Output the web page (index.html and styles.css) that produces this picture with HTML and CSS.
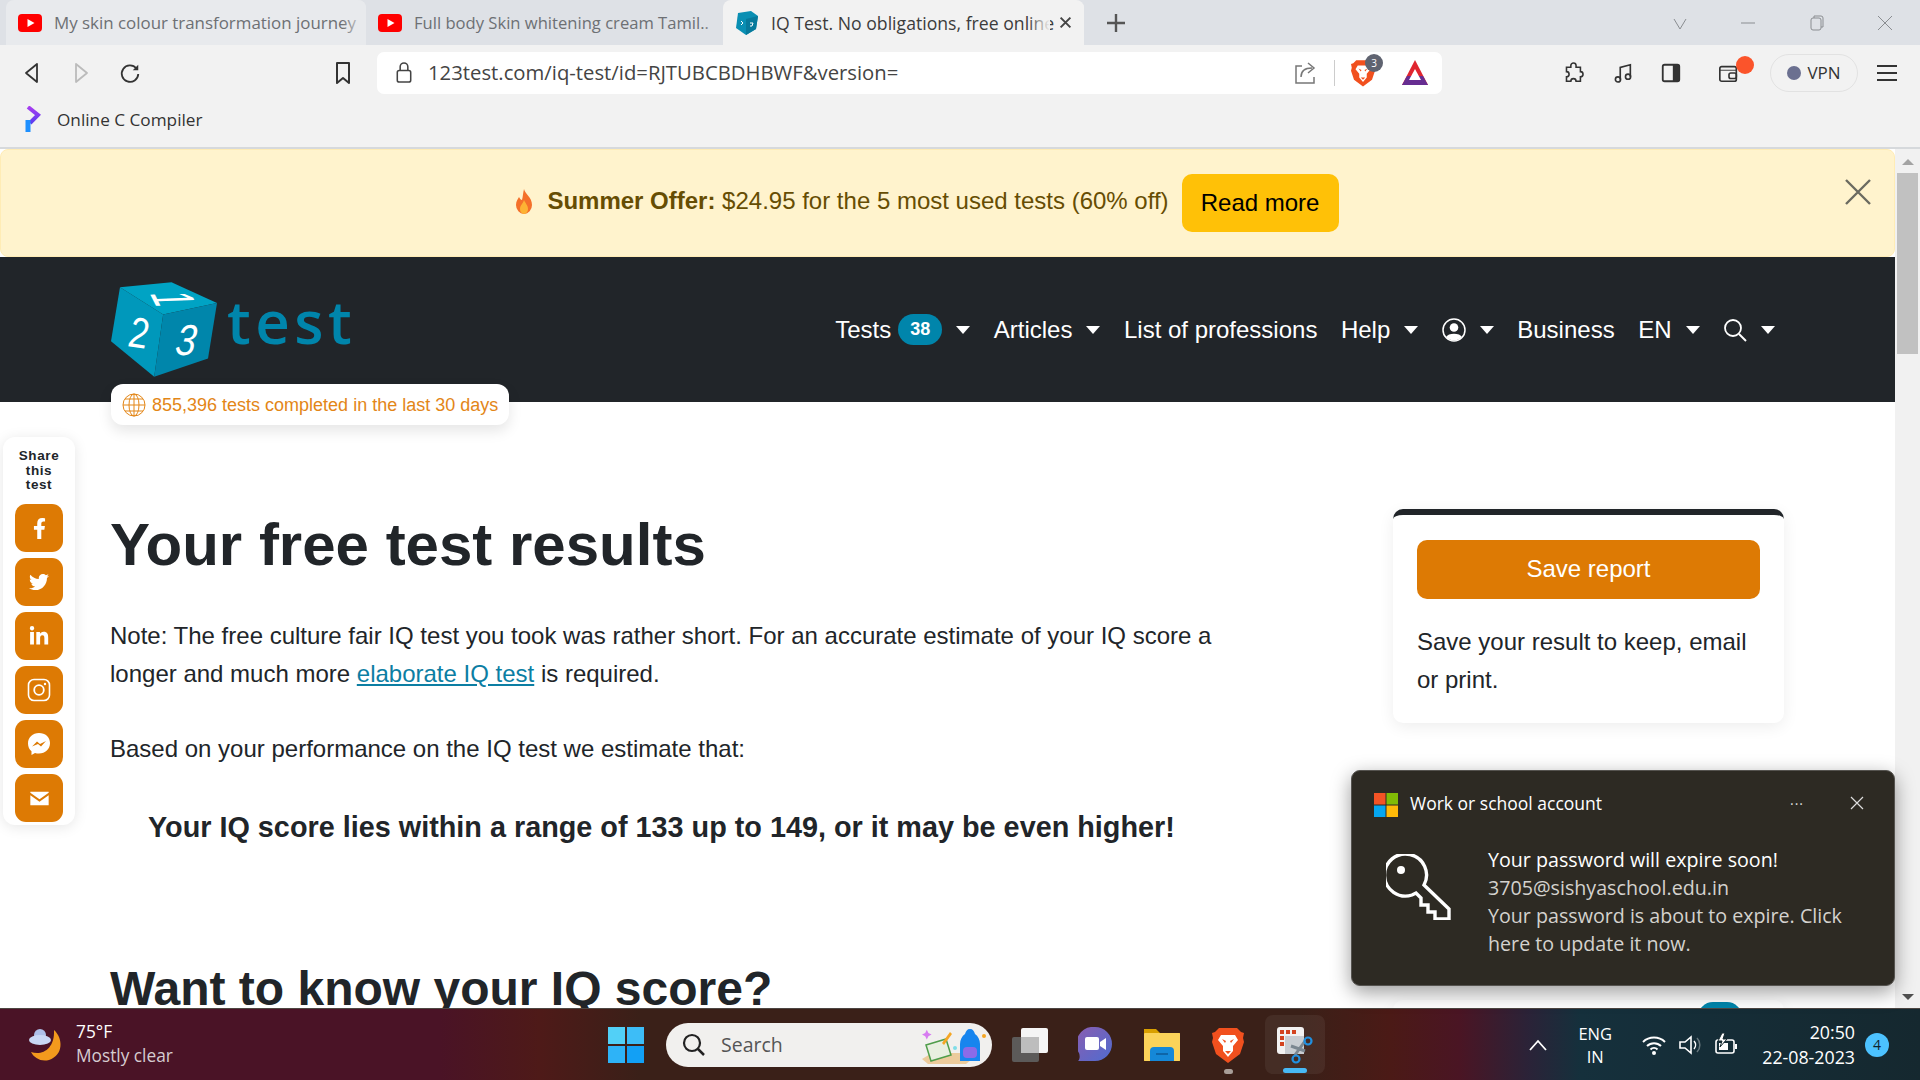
FILE: index.html
```html
<!DOCTYPE html>
<html lang="en">
<head>
<meta charset="utf-8">
<title>IQ Test</title>
<link rel="stylesheet" href="styles.css">
</head>
<body>
<div class="screen">
  <div class="tabs">
    <div class="tab tab-one">
      <svg class="fav" viewBox="0 0 24 18"><rect width="24" height="18" rx="4" fill="#f00"/><path d="M9.500 5v8l7-4z" fill="#fff"/></svg>
      <span class="tab-title">My skin colour transformation journey</span>
    </div>
    <div class="tab tab-two">
      <svg class="fav" viewBox="0 0 24 18"><rect width="24" height="18" rx="4" fill="#f00"/><path d="M9.500 5v8l7-4z" fill="#fff"/></svg>
      <span class="tab-title">Full body Skin whitening cream Tamil..</span>
    </div>
    <div class="tab tab-active">
      <svg class="fav-cube" viewBox="0 0 24 26"><path d="M3 3l13-2 7 5-2 13-10 6-10-7z" fill="#0a8fb3"/><path d="M11 9l12-3-2 13-10 6z" fill="#077a9c"/><path d="M6 11l2 2-2 2M15 13h3l-1 3h-2" stroke="#fff" fill="none"/></svg>
      <span class="tab-title">IQ Test. No obligations, free online test</span>
      <svg class="tab-x" viewBox="0 0 12 12"><path d="M1.500 1.500l9 9M10.500 1.500l-9 9" stroke="#444" stroke-width="1.800"/></svg>
    </div>
    <svg class="tab-plus" viewBox="0 0 20 20"><path d="M10 1v18M1 10h18" stroke="#555" stroke-width="2.400"/></svg>
    <div class="win-controls">
      <svg viewBox="0 0 16 16"><path d="M2 4l6 10 6-10" stroke="#8a8d91" fill="none"/></svg>
      <svg viewBox="0 0 16 16"><path d="M1 8h14" stroke="#8a8d91"/></svg>
      <svg viewBox="0 0 16 16"><rect x="2" y="3" width="10" height="12" rx="2" stroke="#8a8d91" fill="none"/><path d="M5 3V1h7a2 2 0 0 1 2 2v9h-2" stroke="#8a8d91" fill="none"/></svg>
      <svg viewBox="0 0 16 16"><path d="M1 1l14 14M15 1L1 15" stroke="#8a8d91"/></svg>
    </div>
  </div>

  <div class="toolbar">
    <svg class="tool tool-back" viewBox="0 0 20 24"><path d="M15 3L4 12l11 9z" fill="none" stroke="#333" stroke-width="1.800" stroke-linejoin="round"/></svg>
    <svg class="tool" viewBox="0 0 20 24"><path d="M5 3l11 9-11 9z" fill="none" stroke="#bbb" stroke-width="1.800" stroke-linejoin="round"/></svg>
    <svg class="tool" viewBox="0 0 24 24"><path d="M19 7a9 9 0 1 0 2 6" fill="none" stroke="#333" stroke-width="2"/><path d="M21 3v6h-6z" fill="#333"/></svg>
    <svg class="tool tool-mark" viewBox="0 0 20 24"><path d="M4 2h12v20l-6-5-6 5z" fill="none" stroke="#333" stroke-width="2" stroke-linejoin="round"/></svg>
    <div class="address">
      <svg class="lock" viewBox="0 0 18 24"><rect x="2" y="10" width="14" height="12" rx="2" fill="none" stroke="#444" stroke-width="1.600"/><path d="M5 10V6a4 4 0 0 1 8 0v4" fill="none" stroke="#444" stroke-width="1.600"/></svg>
      <span class="url">123test.com/iq-test/id=RJTUBCBDHBWF&amp;version=</span>
      <svg class="share-ico" viewBox="0 0 24 24"><path d="M9 5H3v17h18v-6" fill="none" stroke="#777" stroke-width="1.500"/><path d="M8 16c0-6 4-9 11-9M15 2l6 5-6 5" fill="none" stroke="#777" stroke-width="1.500"/></svg>
      <span class="addr-sep"></span>
      <div class="brave-wrap">
        <svg class="brave" viewBox="0 0 32 36"><path d="M7 1h18l4 4 3 1-1 5 1 4-4 12-8 6-4 3-4-3-8-6L0 15l1-4-1-5 3-1z" fill="#f1501e"/><path d="M9 8h14l3 5-5 6v5l-5 6-5-6v-5l-5-6z" fill="#fff"/><path d="M10 12l4 2-1 2zM22 12l-4 2 1 2zM13 24h6l-3 3z" fill="#f1501e"/></svg>
        <span class="brave-count">3</span>
      </div>
      <svg class="bat" viewBox="0 0 28 28"><path d="M14 1l13 25H1z" fill="#e0252f"/><path d="M1 26l5-9h16l5 9z" fill="#662d91"/><path d="M14 10l6 11H8z" fill="#fff"/></svg>
    </div>
    <svg class="tool ext-puzzle" viewBox="0 0 24 24"><path d="M9 3a3 3 0 0 1 6 0v2h5v5a3 3 0 0 1 0 6v5h-5a3 3 0 0 0-6 0H4v-5a3 3 0 0 0 0-6V5h5z" transform="translate(0 1) scale(.95)" fill="none" stroke="#333" stroke-width="1.800"/></svg>
    <svg class="tool ext-music" viewBox="0 0 24 24"><path d="M9 19V6l11-3v13" fill="none" stroke="#333" stroke-width="1.800"/><circle cx="6.500" cy="19" r="2.800" fill="none" stroke="#333" stroke-width="1.800"/><circle cx="17.500" cy="16" r="2.800" fill="none" stroke="#333" stroke-width="1.800"/></svg>
    <svg class="tool ext-side" viewBox="0 0 24 24"><rect x="3" y="3" width="18" height="18" rx="2" fill="none" stroke="#333" stroke-width="2"/><rect x="14" y="3" width="7" height="18" fill="#333"/></svg>
    <div class="wallet-wrap">
      <svg class="tool" viewBox="0 0 24 24"><rect x="2" y="5" width="18" height="16" rx="2" fill="none" stroke="#333" stroke-width="1.800"/><path d="M2 9h18" stroke="#333"/><rect x="12" y="12" width="8" height="6" rx="2" fill="none" stroke="#333" stroke-width="1.800"/></svg>
      <span class="wallet-dot"></span>
    </div>
    <div class="vpn"><span class="vpn-dot"></span><span>VPN</span></div>
    <div class="burger"><span></span><span></span><span></span></div>
  </div>

  <div class="bookmarks">
    <svg class="pcode" viewBox="0 0 16 26"><defs><linearGradient id="pc" x1="0" y1="0" x2="0" y2="1"><stop offset="0" stop-color="#a83df0"/><stop offset="1" stop-color="#5b3df0"/></linearGradient></defs><path d="M3 1l10 8-8 8" fill="none" stroke="url(#pc)" stroke-width="4"/><path d="M3 14v12" stroke="#1e90ff" stroke-width="5"/></svg>
    <span>Online C Compiler</span>
  </div>

  <div class="viewport">
    <div class="page">
      <div class="alert">
        <svg class="flame" viewBox="0 0 20 28"><path d="M10 1c1 5 8 8 8 16a8 9 0 0 1-16 0c0-4 2-6 3-8 1 2 2 3 3 3 1-4 1-7 2-11z" fill="#f4702a"/><path d="M10 12c1 3 4 5 4 9a4 5 0 0 1-8 0c0-4 3-5 4-9z" fill="#fdb234"/></svg>
        <span class="alert-text"><b>Summer Offer:</b> $24.95 for the 5 most used tests (60% off)</span>
        <span class="alert-btn">Read more</span>
        <svg class="alert-close" viewBox="0 0 26 26"><path d="M1 1l24 24M25 1L1 25" stroke="#6b6a60" stroke-width="2.400"/></svg>
      </div>

      <div class="nav">
        <svg class="logo-cube" viewBox="93 65 319 285">
          <path d="M120 80L275 65 412 128 250 162z" fill="#00a3c4"/>
          <path d="M120 80L250 162 223 350 93 243z" fill="#0098bb"/>
          <path d="M250 162L412 128 385 295 223 350z" fill="#0086ab"/>
          <text class="cube-num" transform="matrix(.3 .6 -1.300 .17 210 101)">1</text>
          <text class="cube-num" transform="matrix(.8 .12 -.05 1 146 258)">2</text>
          <text class="cube-num" transform="translate(283 285) scale(.85 1) skewX(-8)">3</text>
        </svg>
        <span class="logo-word">test</span>
        <div class="menu">
          <span class="menu-item">Tests<span class="badge">38</span><i class="caret"></i></span>
          <span class="menu-item">Articles<i class="caret"></i></span>
          <span class="menu-item">List of professions</span>
          <span class="menu-item">Help<i class="caret"></i></span>
          <span class="menu-item"><svg class="user-ico" viewBox="0 0 24 24"><circle cx="12" cy="12" r="11" fill="none" stroke="#fff" stroke-width="1.500"/><circle cx="12" cy="9.500" r="4.300" fill="#fff"/><path d="M4 19c2-4.500 14-4.500 16 0a11 11 0 0 1-16 0z" fill="#fff"/></svg><i class="caret"></i></span>
          <span class="menu-item">Business</span>
          <span class="menu-item">EN<i class="caret"></i></span>
          <span class="menu-item"><svg class="search-ico" viewBox="0 0 24 24"><circle cx="10" cy="10" r="8" fill="none" stroke="#fff" stroke-width="1.800"/><path d="M16 16l7 7" stroke="#fff" stroke-width="2"/></svg><i class="caret"></i></span>
        </div>
        <div class="counter">
          <svg class="globe" viewBox="0 0 24 24"><g fill="none" stroke="#e38617" stroke-width="1"><circle cx="12" cy="12" r="11"/><ellipse cx="12" cy="12" rx="5" ry="11"/><path d="M12 1v22M1 12h22M3 6h18M3 18h18"/></g></svg>
          <span>855,396 tests completed in the last 30 days</span>
        </div>
      </div>

      <div class="content">
        <div class="article">
          <h1>Your free test results</h1>
          <p>Note: The free culture fair IQ test you took was rather short. For an accurate estimate of your IQ score a longer and much more <a href="#">elaborate IQ test</a> is required.</p>
          <p>Based on your performance on the IQ test we estimate that:</p>
          <p class="score">Your IQ score lies within a range of 133 up to 149, or it may be even higher!</p>
          <h2>Want to know your IQ score?</h2>
        </div>
        <div class="aside">
          <div class="card">
            <span class="save-btn">Save report</span>
            <p>Save your result to keep, email or print.</p>
          </div>
          <div class="card card-next"><span class="next-dot"></span></div>
        </div>
      </div>

      <div class="sharebar">
        <div class="share-title">Share this test</div>
        <span class="social"><svg viewBox="0 0 320 512" class="s-fb"><path d="M279.14 288l14.22-92.66h-88.91v-60.13c0-25.35 12.42-50.06 52.24-50.06h40.42V6.26S260.43 0 225.36 0c-73.22 0-121.08 44.38-121.08 124.72v70.62H22.89V288h81.39v224h100.17V288z"/></svg></span>
        <span class="social"><svg viewBox="0 0 512 512" class="s-tw"><path d="M459.37 151.716c.325 4.548.325 9.097.325 13.645 0 138.72-105.583 298.558-298.558 298.558-59.452 0-114.68-17.219-161.137-47.106 8.447.974 16.568 1.299 25.34 1.299 49.055 0 94.213-16.568 130.274-44.832-46.132-.975-84.792-31.188-98.112-72.772 6.498.974 12.995 1.624 19.818 1.624 9.421 0 18.843-1.3 27.614-3.573-48.081-9.747-84.143-51.98-84.143-102.985v-1.299c13.969 7.797 30.214 12.67 47.431 13.319-28.264-18.843-46.781-51.005-46.781-87.391 0-19.492 5.197-37.36 14.294-52.954 51.655 63.675 129.3 105.258 216.365 109.807-1.624-7.797-2.599-15.918-2.599-24.04 0-57.828 46.782-104.934 104.934-104.934 30.213 0 57.502 12.67 76.67 33.137 23.715-4.548 46.456-13.32 66.599-25.34-7.798 24.366-24.366 44.833-46.132 57.827 21.117-2.273 41.584-8.122 60.426-16.243-14.292 20.791-32.161 39.308-52.628 54.253z"/></svg></span>
        <span class="social"><svg viewBox="0 0 448 512" class="s-in"><path d="M100.28 448H7.4V148.9h92.88zM53.79 108.1C24.09 108.1 0 83.5 0 53.8a53.79 53.79 0 0 1 107.58 0c0 29.7-24.1 54.3-53.79 54.3zM447.9 448h-92.68V302.4c0-34.7-.7-79.2-48.29-79.2-48.29 0-55.69 37.7-55.69 76.7V448h-92.78V148.9h89.08v40.8h1.3c12.4-23.5 42.69-48.3 87.88-48.3 94 0 111.28 61.9 111.28 142.3V448z"/></svg></span>
        <span class="social"><svg viewBox="0 0 24 24" class="s-ig"><rect x="1.500" y="1.500" width="21" height="21" rx="5.500" fill="none" stroke="#fff" stroke-width="1.600"/><circle cx="12" cy="12" r="4.800" fill="none" stroke="#fff" stroke-width="1.800"/><circle cx="18" cy="6" r="1.200"/></svg></span>
        <span class="social"><svg viewBox="0 0 24 24" class="s-ms"><path d="M12 1C5.700 1 1 5.500 1 11.500c0 3.200 1.300 5.900 3.500 7.800V23l3.500-2c1.300.4 2.600.6 4 .6 6.300 0 11-4.500 11-10.500S18.300 1 12 1z"/><path d="M5 14.500l5-5 3 2.500 6-3-5 5.500-3-2.500z" fill="#dd7a04"/></svg></span>
        <span class="social"><svg viewBox="0 0 24 18" class="s-em"><path d="M1 1h22v1L12 10 1 2zM1 5l11 8 11-8v12H1z"/></svg></span>
      </div>
    </div>
    <div class="scrollbar">
      <i class="arrow-up"></i>
      <span class="thumb"></span>
      <i class="arrow-down"></i>
    </div>
  </div>

  <div class="taskbar">
    <div class="weather">
      <svg class="moon" viewBox="0 0 36 34"><path d="M26 2c9 8 10 25-5 30-8 2-15-2-18-8 11 4 24-3 23-22z" fill="#f39a1d"/><circle cx="12" cy="7" r="6" fill="#aebfe8"/><ellipse cx="12" cy="12" rx="11" ry="5" fill="#c9d7f4"/></svg>
      <div class="weather-text"><div>75°F</div><div class="weather-sub">Mostly clear</div></div>
    </div>
    <div class="tb-center">
      <svg class="start" viewBox="0 0 36 36"><rect width="17" height="17" fill="#52d0f7"/><rect x="19" width="17" height="17" fill="#3dbdf7"/><rect y="19" width="17" height="17" fill="#2eb3f7"/><rect x="19" y="19" width="17" height="17" fill="#12a0f5"/></svg>
      <div class="search-pill">
        <svg class="tb-search" viewBox="0 0 24 24"><circle cx="10" cy="10" r="8" fill="none" stroke="#222" stroke-width="2.200"/><path d="M16 16l6 6" stroke="#222" stroke-width="2.500"/></svg>
        <span class="search-word">Search</span>
        <svg class="search-art" viewBox="0 0 72 44"><path d="M2 36l10-6h30l10 6-6 5H8z" fill="#eccb9c"/><path d="M6 22l20-6 5 16-20 6z" fill="#e8efe0" stroke="#4f9d4a" stroke-width="1.500"/><path d="M22 20l8-11 2 2-8 11z" fill="#f5a623"/><path d="M1 1l2 4 4 2-4 2-2 4-2-4-4-2 4-2z" transform="translate(6 6) scale(.8)" fill="#d77cf0"/><circle cx="35" cy="25" r="2" fill="#7fdde8"/><path d="M50 6c3 0 4 2 5 5 3 2 5 6 5 10v17H40V21c0-4 2-8 5-10 1-3 2-5 5-5z" fill="#1785ee"/><rect x="43" y="24" width="14" height="11" rx="4" fill="#8a6be8"/><circle cx="64" cy="13" r="2" fill="#f5a623"/></svg>
      </div>
      <svg class="tb-ico taskview" viewBox="0 0 36 34"><rect x="9" y="0" width="27" height="25" rx="2" fill="#f5f5f5"/><rect y="9" width="27" height="25" rx="2" fill="#606060" opacity=".92"/><rect x="9" y="9" width="18" height="16" fill="#bdbdbd"/></svg>
      <svg class="tb-ico chat" viewBox="0 0 34 36"><defs><linearGradient id="cg" x1="0" y1="0" x2="1" y2="1"><stop offset="0" stop-color="#8a5db0"/><stop offset="1" stop-color="#4f6cd0"/></linearGradient></defs><path d="M17 0a17 17 0 0 1 0 34H0c2-2 2-5 1-8A17 17 0 0 1 17 0z" fill="url(#cg)"/><rect x="7" y="10" width="14" height="13" rx="2" fill="#fff"/><path d="M22 15l6-4v12l-6-4z" fill="#fff"/></svg>
      <svg class="tb-ico folder" viewBox="0 0 36 32"><path d="M0 0h12l4 4h20v28H0z" fill="#d9a000"/><rect y="4" width="36" height="28" rx="1" fill="#fbd35a"/><path d="M6 22a4 4 0 0 1 4-4h16a4 4 0 0 1 4 4v10H6z" fill="#1588d8"/><path d="M12 25h12" stroke="#0c5a98" stroke-width="1.500"/></svg>
      <div class="tb-slot">
        <svg class="tb-ico brave-tb" viewBox="0 0 32 36"><path d="M7 1h18l4 4 3 1-1 5 1 4-4 12-8 6-4 3-4-3-8-6L0 15l1-4-1-5 3-1z" fill="#f1501e"/><path d="M9 8h14l3 5-5 6v5l-5 6-5-6v-5l-5-6z" fill="#fff"/><path d="M10 12l4 2-1 2zM22 12l-4 2 1 2zM13 24h6l-3 3z" fill="#f1501e"/></svg>
        <span class="run-dot"></span>
      </div>
      <div class="snip">
        <svg class="tb-ico snip-ico" viewBox="0 0 36 38"><rect x="0" y="0" width="27" height="27" rx="3" fill="#f2f2f2"/><g fill="#d3431f"><rect x="3" y="3" width="4" height="4"/><rect x="9" y="3" width="4" height="4"/><rect x="15" y="3" width="4" height="4"/><rect x="3" y="9" width="4" height="4"/><rect x="3" y="15" width="4" height="4"/></g><path d="M8 9h19v18H8z" fill="#c8cdd2"/><path d="M14 19l14 5M28 14l-10 14" stroke="#7b8791" stroke-width="3"/><circle cx="31" cy="14" r="3.500" fill="none" stroke="#2090e0" stroke-width="2.200"/><circle cx="19" cy="32" r="3.500" fill="none" stroke="#2090e0" stroke-width="2.200"/></svg>
        <span class="run-bar"></span>
      </div>
    </div>
    <div class="tray">
      <svg class="tray-chev" viewBox="0 0 18 12"><path d="M1 11l8-9 8 9" fill="none" stroke="#fff" stroke-width="1.800"/></svg>
      <div class="lang"><div>ENG</div><div>IN</div></div>
      <svg class="tray-ico" viewBox="0 0 24 24"><g fill="none" stroke="#fff" stroke-width="2"><path d="M1 9a16 16 0 0 1 22 0M5 13a10 10 0 0 1 14 0M8.500 16.500a5 5 0 0 1 7 0"/></g><circle cx="12" cy="20" r="2" fill="#fff"/></svg>
      <svg class="tray-ico" viewBox="0 0 24 24"><path d="M2 9h5l6-5v16l-6-5H2z" fill="none" stroke="#fff" stroke-width="1.600"/><path d="M16 8a6 6 0 0 1 0 8" fill="none" stroke="#fff" stroke-width="1.500"/><path d="M19 5a10 10 0 0 1 0 14" fill="none" stroke="#fff" stroke-opacity=".35" stroke-width="1.500"/></svg>
      <svg class="tray-ico" viewBox="0 0 24 24"><rect x="2" y="7" width="18" height="13" rx="2" fill="none" stroke="#fff" stroke-width="1.600"/><rect x="5" y="10" width="9" height="7" fill="#fff"/><rect x="21" y="11" width="2" height="5" fill="#fff"/><path d="M8 0L4 8h4l-2 6 7-8H9l2-6z" fill="#fff" stroke="#16292f"/></svg>
      <div class="clock"><div>20:50</div><div>22-08-2023</div></div>
      <span class="notif-count">4</span>
    </div>
  </div>

  <div class="toast">
    <div class="toast-head">
      <svg class="ms-logo" viewBox="0 0 24 24"><rect width="11.500" height="11.500" fill="#f35325"/><rect x="12.500" width="11.500" height="11.500" fill="#81bc06"/><rect y="12.500" width="11.500" height="11.500" fill="#05a6f0"/><rect x="12.500" y="12.500" width="11.500" height="11.500" fill="#ffba08"/></svg>
      <span class="toast-app">Work or school account</span>
      <span class="toast-more">···</span>
      <svg class="toast-x" viewBox="0 0 14 14"><path d="M1 1l12 12M13 1L1 13" stroke="#ddd" stroke-width="1.200"/></svg>
    </div>
    <div class="toast-body">
      <svg class="key" viewBox="0 0 66 66"><g fill="none" stroke="#fff" stroke-width="3.400"><path d="M38 31l25 24v10H49v-7h-7v-7h-7v-7l-5-5-4 2a21 21 0 1 1 12-10z"/></g><circle cx="15" cy="16" r="4" fill="#fff"/></svg>
      <div class="toast-text">
        <div class="toast-title">Your password will expire soon!</div>
        <div>3705@sishyaschool.edu.in</div>
        <div>Your password is about to expire. Click here to update it now.</div>
      </div>
    </div>
  </div>
</div>
</body>
</html>
```

FILE: styles.css
```css
* { box-sizing: border-box; }
html, body { margin: 0; height: 100%; overflow: hidden; }
body { font-family: "Liberation Sans", Arial, sans-serif; color: #212529; }
.screen { position: relative; width: 1920px; height: 1080px; display: flex; flex-direction: column; overflow: hidden; background: #fff; }

/* tabs */
.tabs { height: 45px; flex: none; display: flex; align-items: flex-end; background: #dee1e6; font-family: "Open Sans", sans-serif; padding-left: 6px; }
.tab { height: 45px; display: flex; align-items: center; border-radius: 8px 8px 0 0; padding-left: 12px; position: relative; overflow: hidden; font-size: 16.900px; color: #6d7074; }
.tab::after { content: ""; position: absolute; top: 0; bottom: 0; width: 34px; background: linear-gradient(90deg, rgba(222,225,230,0), #dee1e6); }
.tab-one { width: 360px; background: #e8eaed; }
.tab-one::after { right: 0; background: linear-gradient(90deg, rgba(232,234,237,0), #e8eaed); width: 24px; }
.tab-two { width: 357px; font-size: 16.600px; }
.tab-two::after { right: 0; width: 20px; }
.tab-active { width: 361px; background: #f2f2f2; color: #3c3c3c; font-size: 17.650px; }
.tab-active::after { right: 34px; background: linear-gradient(90deg, rgba(242,242,242,0), #f2f2f2); width: 22px; }
.tab-title { white-space: nowrap; margin-left: 12px; }
.fav { width: 24px; height: 18px; flex: none; }
.fav-cube { width: 24px; height: 26px; flex: none; }
.tab-x { position: absolute; right: 12px; top: 16px; width: 13px; height: 13px; background: #f2f2f2; z-index: 1; box-shadow: 0 0 0 5px #f2f2f2, 8px 0 0 12px #f2f2f2; }
.tab-plus { width: 20px; height: 20px; margin: 0 0 12px 22px; flex: none; }
.win-controls { margin-left: auto; display: flex; align-items: center; gap: 52.500px; height: 45px; padding-right: 27px; }
.win-controls svg { width: 16px; height: 16px; }

/* toolbar */
.toolbar { height: 55px; flex: none; display: flex; align-items: center; background: #f2f2f2; padding: 0 0 0 21px; }
.tool { width: 22px; height: 24px; flex: none; margin-right: 27px; }
.tool-mark { margin: 0 0 0 165px; width: 20px; }
.address { width: 1065px; height: 42px; margin-left: 24px; background: #fff; border-radius: 7px; display: flex; align-items: center; padding-left: 18px; }
.lock { width: 18px; height: 23px; flex: none; }
.url { margin: -2px 0 0 15px; font: 20.300px "Open Sans", sans-serif; color: #444; white-space: nowrap; }
.share-ico { width: 24px; height: 24px; margin-left: auto; flex: none; }
.addr-sep { width: 1px; height: 26px; background: #ccc; margin-left: 17px; }
.brave-wrap { position: relative; margin-left: 16px; width: 24px; height: 28px; }
.brave { width: 24px; height: 28px; display: block; }
.brave-count { position: absolute; top: -5px; left: 14px; width: 18px; height: 18px; border-radius: 50%; background: #5f6370; color: #fff; font: 10px "Open Sans", sans-serif; display: flex; align-items: center; justify-content: center; }
.bat { width: 28px; height: 28px; margin: 0 13px 0 26px; flex: none; }
.ext-puzzle { margin-left: 121px; margin-right: 27px; }
.ext-music { margin-right: 26px; }
.ext-side { margin-right: 36px; }
.wallet-wrap { position: relative; width: 24px; height: 24px; }
.wallet-dot { position: absolute; right: -12px; top: -5px; width: 18px; height: 18px; border-radius: 50%; background: #fb542b; }
.vpn { width: 88px; height: 38px; margin-left: 28px; border: 1px solid #e2e2e2; border-radius: 19px; display: flex; align-items: center; justify-content: center; gap: 6px; font: 17px "Open Sans", sans-serif; color: #333; }
.vpn-dot { width: 14px; height: 14px; border-radius: 50%; background: #6b7090; }
.burger { margin-left: 19px; width: 20px; display: flex; flex-direction: column; gap: 5px; }
.burger span { height: 2px; background: #333; }

/* bookmarks */
.bookmarks { height: 49px; flex: none; display: flex; align-items: center; padding: 0 0 9px 25px; gap: 16px; background: #f2f2f2; border-bottom: 2px solid #d6d9dc; font: 17.200px "Open Sans", sans-serif; color: #333; }
.pcode { width: 16px; height: 26px; }

/* page */
.viewport { flex: 1; min-height: 0; display: flex; overflow: hidden; }
.page { flex: 1; min-width: 0; position: relative; overflow: hidden; }
.scrollbar { width: 25px; flex: none; background: #f1f1f1; display: flex; flex-direction: column; align-items: center; }
.arrow-up { margin-top: 10px; border: 6px solid transparent; border-bottom: 6px solid #a3a3a3; border-top: 0; }
.thumb { width: 21px; height: 181px; background: #c1c1c1; margin-top: 8px; }
.arrow-down { margin-top: auto; margin-bottom: 8px; border: 6px solid transparent; border-top: 6px solid #505050; border-bottom: 0; }

.alert { height: 108px; display: flex; align-items: center; justify-content: center; gap: 13px; padding-right: 42px; position: relative; background: #fff3cd; border: 1px solid #ffecb5; border-radius: 8px; color: #664d03; font-size: 24px; }
.flame { width: 20px; height: 28px; margin-top: -2px; }
.alert-text { margin-top: -4px; }
.alert-btn { width: 157px; height: 58px; display: flex; align-items: center; justify-content: center; background: #ffc107; border-radius: 10px; color: #000; }
.alert-close { position: absolute; right: 23px; top: 29px; width: 26px; height: 26px; }

.nav { height: 145px; display: flex; align-items: center; padding: 0 120px 0 111px; position: relative; background: #212529; color: #fff; font-size: 24px; }
.logo-cube { width: 106px; height: 95px; flex: none; }
.cube-num { font: italic 400 130px "Liberation Sans", sans-serif; fill: #fff; }
.logo-word { font: 600 60px "Open Sans", sans-serif; color: #0085ab; letter-spacing: 4.500px; margin: -17px 0 0 10px; }
.menu { margin-left: auto; display: flex; align-items: center; gap: 23.500px; }
.menu-item { display: flex; align-items: center; }
.badge { width: 44px; height: 31px; margin-left: 7px; border-radius: 16px; background: #0085ab; display: flex; align-items: center; justify-content: center; font-size: 18px; font-weight: 700; }
.caret { margin-left: 14px; border: 7px solid transparent; border-top: 8px solid #fff; border-bottom: 0; }
.user-ico { width: 24px; height: 24px; }
.search-ico { width: 24px; height: 24px; }
.counter { position: absolute; left: 111px; top: 127px; width: 398px; height: 41px; display: flex; align-items: center; gap: 6px; padding: 1px 0 0 11px; background: #fff; border-radius: 12px; box-shadow: 0 6px 14px rgba(0,0,0,.1); color: #e38617; font-size: 18px; z-index: 2; }
.globe { width: 24px; height: 24px; flex: none; }

.content { display: flex; padding-left: 110px; }
.article { width: 1110px; flex: none; }
h1 { margin: 107px 0 0; font-size: 60px; line-height: 72px; font-weight: 700; }
.article p { margin: 36px 0 0; font-size: 24px; line-height: 38px; }
.article p + p { margin-top: 37px; }
.article a { color: #0c7ea3; }
.article .score { margin: 40px 0 0 38px; font-size: 28.800px; line-height: 38px; font-weight: 700; white-space: nowrap; }
h2 { margin: 114px 0 0; font-size: 48px; line-height: 58px; font-weight: 700; }
.aside { margin: 107px 0 0 173px; width: 391px; flex: none; }
.card { height: 214px; padding: 25px 24px 0; background: #fff; border-top: 6px solid #212529; border-radius: 10px; box-shadow: 0 4px 16px rgba(0,0,0,.07); position: relative; }
.card p { margin: 24px 0 0; font-size: 24px; line-height: 38px; }
.save-btn { height: 59px; display: flex; align-items: center; justify-content: center; background: #dd7a04; border-radius: 10px; color: #fff; font-size: 24px; padding-bottom: 2px; }
.card-next { margin-top: 277px; border-top: 0; }
.next-dot { position: absolute; right: 42px; top: 2px; width: 44px; height: 30px; border-radius: 20px; background: #0085ab; }

.sharebar { position: absolute; left: 3px; top: 288px; width: 72px; height: 388px; padding: 12px 12px; background: #fff; border-radius: 12px; box-shadow: 0 2px 14px rgba(0,0,0,.1); display: flex; flex-direction: column; align-items: center; gap: 6px; }
.share-title { font-size: 13.500px; line-height: 14.700px; font-weight: 700; text-align: center; letter-spacing: .6px; margin-bottom: 5px; }
.social { width: 48px; height: 48px; flex: none; display: flex; align-items: center; justify-content: center; background: #dd7a04; border-radius: 11px; }
.social svg { fill: #fff; }
.s-fb { width: 13px; height: 21px; }
.s-tw { width: 20px; height: 20px; }
.s-in { width: 20px; height: 21px; }
.s-ig { width: 24px; height: 24px; }
.s-ms { width: 24px; height: 24px; }
.s-em { width: 21px; height: 15px; }

/* taskbar */
.taskbar { height: 72px; flex: none; display: flex; align-items: center; color: #fff; border-top: 1px solid #4d4642; background: linear-gradient(90deg, #4a1326 0, #4a1326 440px, #4e1a18 540px, #3a2018 640px, #3a2018 1300px, #4b1a16 1390px, #4a1524 1460px, #2a2338 1530px, #15303c 1580px, #15282f 1920px); font-family: "Open Sans", sans-serif; }
.weather { width: 608px; flex: none; display: flex; align-items: center; padding-left: 28px; gap: 12px; }
.moon { width: 36px; height: 34px; }
.weather-text { font-size: 17.300px; line-height: 24px; margin-top: -2px; }
.weather-sub { color: #d6ccd0; }
.tb-center { display: flex; align-items: center; }
.start { width: 36px; height: 36px; flex: none; }
.search-pill { width: 326px; height: 44px; margin-left: 22px; border-radius: 22px; background: #f1f0ee; display: flex; align-items: center; padding-left: 16px; color: #555; position: relative; }
.tb-search { width: 24px; height: 24px; }
.search-word { margin-left: 15px; font-size: 19.500px; }
.search-art { position: absolute; right: 0; top: 0; width: 72px; height: 44px; }
.tb-ico { width: 36px; height: 38px; flex: none; display: block; }
.taskview { margin-left: 20px; height: 34px; }
.chat { margin-left: 30px; width: 34px; height: 36px; }
.folder { margin-left: 32px; height: 32px; }
.tb-slot { margin-left: 32px; width: 32px; position: relative; }
.brave-tb { width: 32px; height: 36px; }
.run-dot { position: absolute; left: 12px; bottom: -11px; width: 9px; height: 5px; border-radius: 3px; background: #a89e98; }
.snip { margin-left: 21px; width: 60px; height: 59px; border-radius: 8px; background: rgba(255,255,255,.06); display: flex; justify-content: center; padding-top: 12px; position: relative; }
.run-bar { position: absolute; left: 18px; bottom: 1px; width: 24px; height: 5px; border-radius: 3px; background: #47b9f5; }
.tray { margin-left: auto; display: flex; align-items: center; padding-right: 31px; }
.tray-chev { width: 18px; height: 12px; }
.lang { width: 70px; margin-left: 13px; text-align: center; font-size: 16.500px; line-height: 23px; }
.tray-ico { width: 24px; height: 24px; margin-left: 12px; }
.tray-ico:first-of-type { margin-left: 0; }
.clock { margin-left: 24px; text-align: right; font-size: 17.800px; line-height: 25px; }
.notif-count { width: 24px; height: 24px; margin-left: 10px; border-radius: 50%; background: #4cc2ff; color: #10242c; display: flex; align-items: center; justify-content: center; font-size: 14px; }

/* toast */
.toast { position: absolute; left: 1351px; top: 770px; width: 544px; height: 216px; padding: 19px 23px 0 22px; background: #2d2a23; border: 1px solid #55534f; border-radius: 9px; box-shadow: 0 6px 20px rgba(0,0,0,.4); color: #fff; font-family: "Open Sans", sans-serif; }
.toast-head { display: flex; align-items: center; height: 26px; }
.ms-logo { width: 24px; height: 24px; flex: none; margin-top: 3px; }
.toast-app { margin-left: 12px; font-size: 17.500px; }
.toast-more { margin-left: auto; font-size: 14px; letter-spacing: 1px; color: #ddd; }
.toast-x { width: 14px; height: 14px; margin: 0 7px 0 46px; }
.toast-body { display: flex; margin-top: 37px; }
.key { width: 66px; height: 66px; margin: 1px 0 0 12px; flex: none; }
.toast-text { margin: -7px 0 0 36px; width: 390px; font-size: 19.660px; line-height: 28px; color: #d4d2ce; }
.toast-title { color: #fff; }
```
